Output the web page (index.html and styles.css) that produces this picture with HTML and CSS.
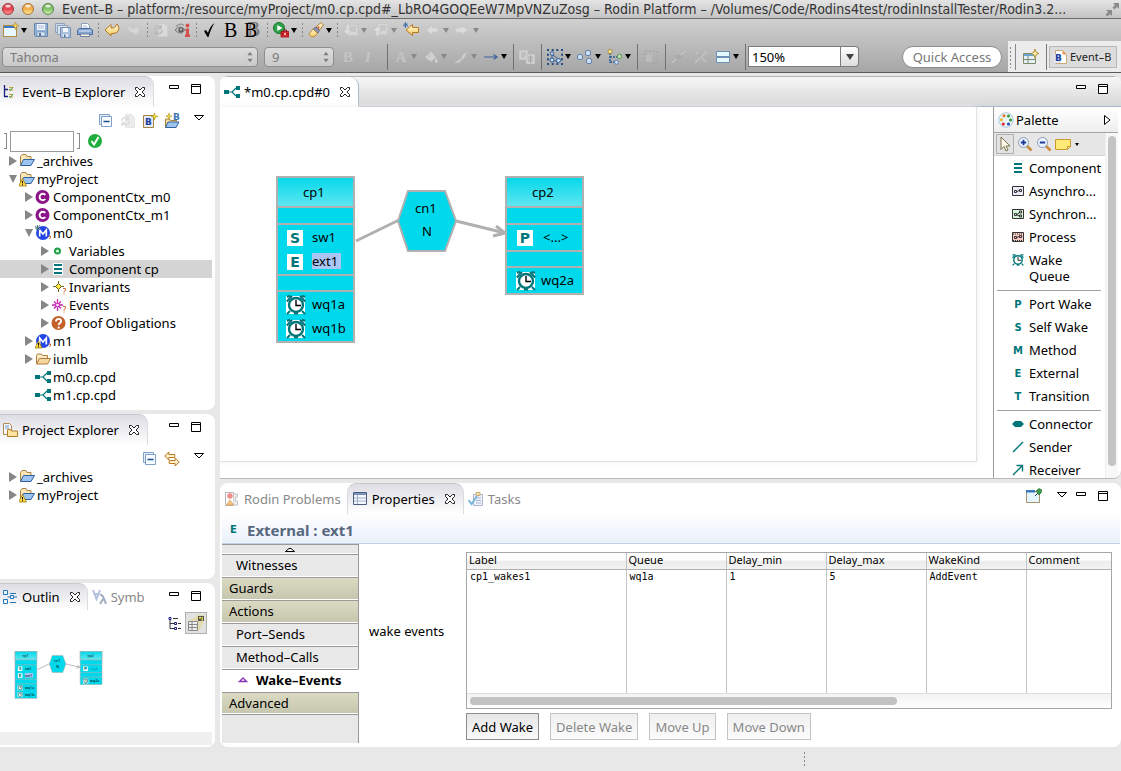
FILE: index.html
```html
<!DOCTYPE html>
<html lang="en">
<head>
<meta charset="utf-8">
<title>Event-B - Rodin Platform</title>
<link rel="stylesheet" href="styles.css">
</head>
<body>
<svg class="defs" aria-hidden="true">
  <defs>
    <linearGradient id="gRed" x1="0" y1="0" x2="0" y2="1"><stop offset="0" stop-color="#d8414a"/><stop offset=".5" stop-color="#e8434d"/><stop offset="1" stop-color="#ff9d9d"/></linearGradient>
    <linearGradient id="gAmber" x1="0" y1="0" x2="0" y2="1"><stop offset="0" stop-color="#e5a04a"/><stop offset=".5" stop-color="#f3b14f"/><stop offset="1" stop-color="#ffeb9a"/></linearGradient>
    <linearGradient id="gGreen" x1="0" y1="0" x2="0" y2="1"><stop offset="0" stop-color="#6fae5a"/><stop offset=".5" stop-color="#84c56c"/><stop offset="1" stop-color="#d0f5b0"/></linearGradient>
    <linearGradient id="gHead" x1="0" y1="0" x2="0" y2="1"><stop offset="0" stop-color="#03d8ea"/><stop offset="1" stop-color="#62e6f0"/></linearGradient>
    <linearGradient id="gGold" x1="0" y1="0" x2="0" y2="1"><stop offset="0" stop-color="#fffbe0"/><stop offset="1" stop-color="#f6c85a"/></linearGradient>
    <symbol id="new" viewBox="0 0 16 16"><rect x=".5" y="3.5" width="13" height="11" fill="#e8f6ff" stroke="#b08c3c"/><path d="M1 4h12v2H1z" fill="#3c78c8"/><path d="M12.500 0l1 3 2.500.5-2.500 1-1 3-1-3-3-1 3-.5z" fill="#ffe36a" stroke="#b08a20" stroke-width=".7"/></symbol>
    <symbol id="save" viewBox="0 0 16 16"><path d="M1.500 1.500h13v13h-12l-1-1z" fill="#8fb2d9" stroke="#6c86aa"/><path d="M4 2h8v6H4z" fill="#f4f8fc"/><path d="M5 4h6M5 6h6" stroke="#a9bdd6"/><path d="M4 10h8v4H4z" fill="#dbe6f2" stroke="#6484ac" stroke-width=".6"/><path d="M6 11h2v3H6z" fill="#557199"/></symbol>
    <symbol id="saveall" viewBox="0 0 16 16"><path d="M.5 1.500h9v9h-9z" fill="#c9d8e8" stroke="#8ea2bc"/><path d="M2.500 3.500h10v9h-10z" fill="#d9e4ef" stroke="#8ea2bc"/><path d="M5.500 5.500h10v10h-10z" fill="#a9c1dd" stroke="#7590b4"/><path d="M8 6h5v4H8z" fill="#f4f8fc"/><path d="M8 12h5v3H8z" fill="#e0e9f3"/><path d="M9 12.500h1.500V15H9z" fill="#557199"/></symbol>
    <symbol id="print" viewBox="0 0 16 16"><path d="M4.500 7V1.500h6l2 2V7" fill="#fff" stroke="#8b9dbb"/><path d="M6 4h4M6 6h5" stroke="#a9bad6"/><path d="M.5 8l2-1.500h11l2 1.500v4.500H.5z" fill="#86a4d0" stroke="#4c6ca4"/><path d="M2 9h12" stroke="#dfe9f8"/><path d="M3.500 12h9v2.500h-9z" fill="#fff6d8" stroke="#6a7ea8"/></symbol>
    <symbol id="undo" viewBox="0 0 16 16"><path d="M1 8l6-5.500v3.500c3 .5 5-1 6-4 3 4 2.500 9-4 9.500H7V14z" fill="url(#gGold)" stroke="#b87a22"/></symbol>
    <symbol id="redo" viewBox="0 0 16 16"><path d="M14 8l-5-4.500v3C6 7 4 6 2 3c-1 4 1 7.500 5.500 8H9v3z" fill="#d6d6d6" stroke="#c6c6c6" stroke-width=".6"/></symbol>
    <symbol id="refresh" viewBox="0 0 16 16"><path d="M5.500 1.500h6l3 3v10h-9z" fill="#dadada" stroke="#cccccc"/><path d="M2 8c0-4 5-5 6-2M9 8c0 4-5 5-6 2M8 3v3.500H5M2 13v-3h3" fill="none" stroke="#b9b9b9" stroke-width="1.500"/></symbol>
    <symbol id="eye" viewBox="0 0 16 16"><path d="M0 8c3-4 7-4 10 0-3 4-7 4-10 0z" fill="#b8b8b8" stroke="#7d7d7d"/><circle cx="6" cy="8" r="2.600" fill="#5d5d5d"/><circle cx="6" cy="7.500" r=".9" fill="#ddd"/><path d="M1 4.500c3-3 6-3 8-1" fill="none" stroke="#777"/><path d="M10.500 6.500h3.500v6h1V15h-5v-2.500h1V9h-.5z" fill="#d4504c"/><circle cx="12.500" cy="3.500" r="1.900" fill="#d4504c"/></symbol>
    <symbol id="tick" viewBox="0 0 16 16"><path d="M2 9l2-1 2 3C7 7 9.500 3 12.500 1 10 5 8 9.500 6.500 15H5.500z" fill="#000"/></symbol>
    <symbol id="run" viewBox="0 0 16 16"><circle cx="6" cy="6" r="5.500" fill="#2fa34a" stroke="#19732c"/><path d="M4.300 3l5 3-5 3z" fill="#fff"/><path d="M8 9.500h8V15H8z" fill="#e02a32" stroke="#9c1018" stroke-width=".8"/><path d="M10.500 9.500V8h3v1.500M8 12h8" fill="none" stroke="#8c1018"/><path d="M11 11h2v2h-2z" fill="#fbb"/></symbol>
    <symbol id="torch" viewBox="0 0 16 16"><path d="M8 5l5-4.500 2.500 2.500-4 5z" fill="#ffe7ad" stroke="#b08040"/><path d="M5 7l3-2 3.500 3.500-2 3z" fill="#8d93ac" stroke="#6b6f86"/><path d="M5 7l4.500 4.500L7 14c-3 2-5 0-6-2z" fill="url(#gGold)" stroke="#bd8a34"/><circle cx="10.500" cy="5.500" r=".9" fill="#c33"/></symbol>
    <symbol id="nextann" viewBox="0 0 16 16"><path d="M4.500 2.500h10v11h-10z" fill="#d6d6d6" stroke="#c9c9c9"/><path d="M7 5h6M7 7h6M7 9h6" stroke="#b8b8b8"/><path d="M3 2h3v6h3l-4.500 5L0 8h3z" fill="#dedede" stroke="#bcbcbc" stroke-width=".6"/></symbol>
    <symbol id="prevann" viewBox="0 0 16 16"><path d="M4.500 1.500h10v11h-10z" fill="#d6d6d6" stroke="#c9c9c9"/><path d="M7 4h6M7 6h6M7 8h6" stroke="#b8b8b8"/><path d="M3 14h3V9h3L4.500 4 0 9h3z" fill="#dedede" stroke="#bcbcbc" stroke-width=".6"/></symbol>
    <symbol id="lastedit" viewBox="0 0 16 16"><path d="M15.500 5.500v5h-6v3L3 8l6.500-5.500v3z" fill="url(#gGold)" stroke="#b87a22"/><path d="M2.500 0v6M0 3h5M1 1.200l3.500 3.600M4.500 1.200L1 4.800" stroke="#3c6cae" stroke-width=".9"/></symbol>
    <symbol id="back" viewBox="0 0 16 16"><path d="M13 5.800v4.400H7.500v2.600L.8 8l6.700-4.800v2.600z" fill="#dcdcdc" stroke="#c8c8c8"/></symbol>
    <symbol id="fwd" viewBox="0 0 16 16"><path d="M.8 5.800v4.400h5.500v2.600L13 8 6.300 3.200v2.600z" fill="#dcdcdc" stroke="#c8c8c8"/></symbol>
    <symbol id="bucket" viewBox="0 0 16 16"><path d="M2 8l6-6 5 6-5 5z" fill="#d0d0d0" stroke="#bcbcbc"/><path d="M6 2v6" stroke="#bababa"/><path d="M13 9c2 2 2 5 0 5s-1-3 0-5z" fill="#d0d0d0"/></symbol>
    <symbol id="brush" viewBox="0 0 16 16"><path d="M14.500 2l-5 4-2 4 2 1 3-4z" fill="#d0d0d0" stroke="#b8b8b8" stroke-width=".7"/><path d="M1 14h5l3-3-2-1.500z" fill="#c8c8c8"/></symbol>
    <symbol id="line" viewBox="0 0 16 16"><path d="M1 8h13M10.500 5.500L14 8l-3.500 2.500" fill="none" stroke="#3f5f9d" stroke-width="1.200"/></symbol>
    <symbol id="copyapp" viewBox="0 0 16 16"><path d="M.5 1.500h8v9h-8zM7.500 5.500h8v9h-8z" fill="#d2d2d2" stroke="#c8c8c8"/><path d="M2 4h5M2 6h5M2 8h4M9 8h5M9 10h5M9 12h5M11.500 6v8" stroke="#a9a9a9"/></symbol>
    <symbol id="selall" viewBox="0 0 16 16"><g fill="#234f86"><path d="M0 0h2v2H0zM4.700 0h2v2h-2zM9.300 0h2v2h-2zM14 0h2v2h-2zM0 4.700h2v2H0zM14 4.700h2v2h-2zM0 9.300h2v2H0zM14 9.300h2v2h-2zM0 14h2v2H0zM4.700 14h2v2h-2zM9.300 14h2v2h-2zM14 14h2v2h-2z"/></g><path d="M5 5l7 6M5 11V5M5 12h7" stroke="#2b5c96"/><circle cx="5" cy="4.500" r="1.700" fill="#cfe2f8" stroke="#2b5c96"/><circle cx="5" cy="11" r="2" fill="#cfe2f8" stroke="#2b5c96"/><circle cx="11.500" cy="11.500" r="2" fill="#cfe2f8" stroke="#2b5c96"/></symbol>
    <symbol id="align" viewBox="0 0 16 16"><g fill="#cfe0f2" stroke="#5f83ae"><rect x=".5" y="5.500" width="5" height="5" rx="1.500"/><rect x="8.500" y="1.500" width="5" height="5" rx="1.500"/><rect x="9.500" y="9.500" width="5" height="5" rx="1.500"/></g></symbol>
    <symbol id="arrange" viewBox="0 0 16 16"><path d="M3 4v10M3 8h8M3 13h6" fill="none" stroke="#2b5c96" stroke-width="1.500" stroke-dasharray="2 1"/><circle cx="3" cy="2.500" r="2" fill="#fdf0a4" stroke="#b48a2a"/><circle cx="12.500" cy="7.500" r="2.200" fill="#b8e2ae" stroke="#5b9455"/><circle cx="9.500" cy="13.300" r="2" fill="#cfe2f8" stroke="#5f83ae"/></symbol>
    <symbol id="marquee" viewBox="0 0 16 16"><path d="M2 2h12v12H2z" fill="none" stroke="#a2a2a2" stroke-dasharray="2 2"/><path d="M3 6h6v7H3z" fill="#bdbdbd"/></symbol>
    <symbol id="snip" viewBox="0 0 16 16"><path d="M1 14l5-5M9 6l6-4" stroke="#c4c4c4" stroke-width="1.500"/><path d="M5 6v4M7 6v4M9 6v4M11 6v3" stroke="#a2a2a2"/></symbol>
    <symbol id="cross" viewBox="0 0 16 16"><path d="M2 14L14 2M3 3l10 10" stroke="#c4c4c4" stroke-width="1.200"/><path d="M5 6h3l-2 3" stroke="#a2a2a2" fill="none"/></symbol>
    <symbol id="compart" viewBox="0 0 16 16"><path d="M1.500 2.500h13v11h-13z" fill="#e6f8ff" stroke="#6e90b4"/><path d="M1 8h14" stroke="#6e90b4" stroke-width="2"/></symbol>
    <symbol id="persp" viewBox="0 0 16 16"><path d="M.5 4.500h12v10H.5z" fill="#e3f1fb" stroke="#7f8a68"/><path d="M1 5h11v2H1z" fill="#6ba4cf"/><path d="M5 7v7M1 10.500h11" stroke="#7f8a68"/><path d="M12 0l1.200 3.300L16 4.500l-2.800 1.200L12 9l-1.200-3.300L8 4.500l2.800-1.200z" fill="#fff0a8" stroke="#b08a30" stroke-width=".9"/></symbol>
    <symbol id="bdoc" viewBox="0 0 16 16"><path d="M3.500 1.500h7l4 4v9h-11z" fill="#fff" stroke="#c9a877"/><path d="M10.500 1.500v4h4z" fill="#f0934a"/><path d="M2 5h7v9H2z" fill="#dfe8f8"/></symbol>
    <symbol id="evtree" viewBox="0 0 16 16"><path d="M2.500 1v12M2 5.500h4M2 12.500h4" fill="none" stroke="#1b1f7c" stroke-width="1.300"/><path d="M7 3.500h4M7 6h4M7 10.500h4M7 13h4" stroke="#d9a23a"/><path d="M7 5l1.500 1.500L11 3M7 12l1.500 1.500L11 10" stroke="#3a9a3a" fill="none"/></symbol>
    <symbol id="close" viewBox="0 0 12 12"><path d="M1.500 1.500h2L6 4l2.500-2.500h2v2L8 6l2.500 2.500v2h-2L6 8l-2.500 2.500h-2v-2L4 6 1.500 3.500z" fill="#fff" stroke="#222"/></symbol>
    <symbol id="min" viewBox="0 0 12 12"><path d="M1.500 2.500h9v3h-9z" fill="#fff" stroke="#000"/></symbol>
    <symbol id="max" viewBox="0 0 12 12"><path d="M1.500 1.500h9v9h-9zM1.500 3.500h9" fill="#fff" stroke="#000"/></symbol>
    <symbol id="vmenu" viewBox="0 0 12 12"><path d="M1.500 3.500h9L6 8z" fill="#fff" stroke="#000"/></symbol>
    <symbol id="collapse" viewBox="0 0 16 16"><path d="M1.500 1.500h10v10h-10z" fill="#e6eff8" stroke="#7f9fc4"/><path d="M3.500 3.500h10v10h-10z" fill="#f6fbff" stroke="#7f9fc4"/><path d="M5.500 8.500h6" stroke="#1d4f8c" stroke-width="1.400"/></symbol>
    <symbol id="bnew" viewBox="0 0 16 16"><path d="M1.500 2.500h10v12h-10z" fill="#e2ecfb" stroke="#a8823a"/><path d="M12.500 0l.8 2.700L16 3.500l-2.700.8-.8 2.700-.8-2.700L9 3.500l2.700-.8z" fill="#f7e33c" stroke="#a8921c" stroke-width=".6"/></symbol>
    <symbol id="bfold" viewBox="0 0 16 16"><path d="M1.500 14V6h4l1 1.500h6V14z" fill="#f4dca0" stroke="#a8823a"/><path d="M4 9h11l-3 5.500H1.500z" fill="#9fc4ee" stroke="#2f62a4"/><path d="M5 0l.7 2.500L8 3.200l-2.300.8L5 6.500 4.300 4 2 3.200l2.300-.7z" fill="#f7e33c" stroke="#a8921c" stroke-width=".6"/></symbol>
    <symbol id="ok" viewBox="0 0 16 16"><circle cx="8" cy="8" r="7" fill="#1fae3c"/><path d="M4.500 8l2.500 3.500L11.500 4" fill="none" stroke="#fff" stroke-width="2"/></symbol>
    <symbol id="proj" viewBox="0 0 16 16"><path d="M1.500 12V3.500l1.500-2h4l1 2h4V12z" fill="#fbe6b4" stroke="#a9834a"/><path d="M4.500 6.500h11L12 12.500H1.500z" fill="#9cc4f0" stroke="#2f5f9e"/></symbol>
    <symbol id="projw" viewBox="0 0 16 16"><use href="#proj"/><path d="M3.500 7.500L7.500 15h-8z" fill="#ffdd4a" stroke="#a07810" stroke-width=".8"/><path d="M3.500 10v2.500M3.500 13.300v1" stroke="#000"/></symbol>
    <symbol id="ctx" viewBox="0 0 16 16"><circle cx="7.500" cy="8" r="7" fill="#8b1588"/><path d="M10.300 6A3.200 3.200 0 1 0 10.300 10" fill="none" stroke="#fff" stroke-width="1.900"/></symbol>
    <symbol id="mach" viewBox="0 0 16 16"><circle cx="8" cy="8" r="7" fill="#2345e4"/><path d="M4.700 11.500V5L8 9l3.300-4v6.500" fill="none" stroke="#fff" stroke-width="1.700"/></symbol>
    <symbol id="mach0" viewBox="0 0 16 16"><use href="#mach"/><path d="M0 1l5 4M5 0L1 5M2.500 0v5M0 3h5" stroke="#4a6f80" stroke-width=".9"/><path d="M13.500 11h2v1.500L14.500 14" stroke="#c8642c" fill="none"/></symbol>
    <symbol id="mach1" viewBox="0 0 16 16"><use href="#mach"/><path d="M3.500 8L7 15H0z" fill="#ffdd4a" stroke="#a07810" stroke-width=".8"/><path d="M3.500 10v2.500M3.500 13.300v1" stroke="#000"/><path d="M13.500 11h2v1.500L14.500 14" stroke="#c8642c" fill="none"/></symbol>
    <symbol id="vars" viewBox="0 0 16 16"><circle cx="6.500" cy="8" r="2.500" fill="#d6ffe0" stroke="#21a04a" stroke-width="2"/></symbol>
    <symbol id="bars" viewBox="0 0 16 16"><path d="M2 2h10v12H2z" fill="#fff"/><path d="M3 4h8M3 8h8M3 12h8" stroke="#00767a" stroke-width="2"/></symbol>
    <symbol id="inv" viewBox="0 0 16 16"><path d="M7.500 2v11M2 7.500h11" stroke="#6a6020"/><path d="M7.500 4.500l3 3-3 3-3-3z" fill="#ffe93c" stroke="#6a6020"/><path d="M12 9.500h2.500v2L13 12.500v1M13 14.500v1" stroke="#cc6a3c" fill="none"/></symbol>
    <symbol id="evt" viewBox="0 0 16 16"><path d="M6.500 2v12M1 8h11M3 4.500l7 7M10 4.500l-7 7" stroke="#c722b4" stroke-width="1.300"/><circle cx="6.500" cy="8" r="1.800" fill="#fff" stroke="#c722b4"/><path d="M12 9.500h2.500v2L13 12.500v1M13 14.500v1" stroke="#cc6a3c" fill="none"/></symbol>
    <symbol id="po" viewBox="0 0 16 16"><circle cx="7.500" cy="8" r="7" fill="#c4602a"/><path d="M5 6.500C5 3 10.500 3 10 6.500 10 8 7.700 8 7.700 10M7.700 11.500v2" fill="none" stroke="#fff" stroke-width="1.900"/></symbol>
    <symbol id="folder" viewBox="0 0 16 16"><path d="M1.500 12.500v-8l1-1.500h4l1 1.500h5v3" fill="#fbe9c4" stroke="#b07d3c"/><path d="M4.500 7.500h11l-3 5.500h-11z" fill="#f5d69c" stroke="#b07d3c"/></symbol>
    <symbol id="cpd" viewBox="0 0 16 16"><path d="M0 6h5v4H0zM12 2h4v4h-4zM12 10h4v4h-4z" fill="#00767a"/><path d="M5 8h3l4-4M8 8l4 4" fill="none" stroke="#00767a" stroke-width="1.200"/></symbol>
    <symbol id="pexp" viewBox="0 0 16 16"><path d="M1.500 1.500h6l2 2v9h-8z" fill="#f3f7fd" stroke="#b08c4c"/><path d="M3 4h4M3 6h4" stroke="#7b9cc8"/><path d="M5.500 14.500v-7h3l1 1.500h6v5.500z" fill="#ffe3a0" stroke="#b07d2c"/></symbol>
    <symbol id="link" viewBox="0 0 16 16"><path d="M.8 5l4-4v2.500h6v3h-6V9zM15.200 11l-4 4v-2.500h-6v-3h6V7z" fill="#fff2cc" stroke="#b87a22"/></symbol>
    <symbol id="outl" viewBox="0 0 16 16"><path d="M1.500 1.500h4v4h-4zM1.500 10.500h4v4h-4z" fill="#eef7ff" stroke="#2577b8"/><path d="M8 4.500h6M8 13.500h6M12 8h3M5.500 8h3" stroke="#2577b8"/><path d="M8.500 6.500h3v3h-3z" fill="#eef7ff" stroke="#2577b8"/></symbol>
    <symbol id="symb" viewBox="0 0 16 16"><path d="M1 1l3.500 9L8 1M2.500 5h4" fill="none" stroke="#b3c0e0" stroke-width="2"/><path d="M8 6c2-1 3 1 6 9M11 10l-3 5" fill="none" stroke="#a3adc2" stroke-width="2"/></symbol>
    <symbol id="otree" viewBox="0 0 16 16"><path d="M4 4v9.500h4M4 8.500h4" fill="none" stroke="#333"/><path d="M3 2.500h2v2H3zM8.500 7.500h2v2h-2zM8.500 12.500h2v2h-2z" fill="#fff" stroke="#1d1d80"/><path d="M7 3.500h5M12 8.500h3M12 13.500h3" stroke="#333"/></symbol>
    <symbol id="oview" viewBox="0 0 16 16"><path d="M1 6l9-6h6v6l-5 10z" fill="#e2dcb0"/><path d="M.5 6.500h9v9h-9z" fill="#eee" stroke="#888"/><path d="M1 9.500h8M1 12.500h8M4 7v8" stroke="#888"/><path d="M10 1h6v5h-6z" fill="#555"/><path d="M11 2h2v1.500h-2zM13.500 2H15v1.500h-1.500zM13.500 4H15v1.500h-1.500z" fill="#ffe93c"/></symbol>
    <symbol id="pal" viewBox="0 0 16 16"><circle cx="8" cy="8" r="7.300" fill="#e8f3fa" stroke="#9cc0d4" stroke-width=".8"/><circle cx="6" cy="3.800" r="1.600" fill="#e87c28"/><circle cx="10.500" cy="4" r="1.600" fill="#3a9a3a"/><circle cx="3.400" cy="7.700" r="1.500" fill="#e8b828"/><circle cx="12.600" cy="8" r="1.600" fill="#3a9a3a"/><circle cx="5.300" cy="12" r="1.600" fill="#e8282c"/><circle cx="10.500" cy="12" r="1.600" fill="#2850c8"/></symbol>
    <symbol id="cursor" viewBox="0 0 16 16"><path d="M4 1v12.500l3-3 2 4.500 2-1-2-4h4z" fill="#fffbe8" stroke="#77704e"/></symbol>
    <symbol id="zin" viewBox="0 0 16 16"><path d="M9.500 9.500l5 5" stroke="#c88a3c" stroke-width="2.500"/><circle cx="6.500" cy="6.500" r="5" fill="#eef5fd" stroke="#8a9ab4"/><path d="M3.800 6.500h5.400M6.500 3.800v5.400" stroke="#1d3d9c" stroke-width="1.800"/></symbol>
    <symbol id="zout" viewBox="0 0 16 16"><path d="M9.500 9.500l5 5" stroke="#c88a3c" stroke-width="2.500"/><circle cx="6.500" cy="6.500" r="5" fill="#eef5fd" stroke="#8a9ab4"/><path d="M3.800 6.500h5.400" stroke="#1d3d9c" stroke-width="1.800"/></symbol>
    <symbol id="note" viewBox="0 0 16 16"><path d="M.5 3.500h15v7l-3 3H.5z" fill="#ffe978" stroke="#c89a2c"/><path d="M15.500 10.500h-3v3z" fill="#fff6c0" stroke="#c89a2c"/></symbol>
    <symbol id="async" viewBox="0 0 12 12"><path d="M.5 1.500h11v9H.5z" fill="#ececfb" stroke="#333"/><path d="M2.500 5.500h2v2h-2zM7.500 4.500h2v2h-2zM5 6.500l2-1" fill="none" stroke="#333"/></symbol>
    <symbol id="sync" viewBox="0 0 12 12"><path d="M.5 1.500h11v9H.5z" fill="#d8f4d8" stroke="#333"/><path d="M2.500 5.500h2v2h-2zM7.500 3h2v2h-2zM7.500 7h2v2h-2zM5 6.500l2.500-2M5 7l2.500 1" fill="none" stroke="#333"/></symbol>
    <symbol id="proc" viewBox="0 0 12 12"><path d="M.5 1.500h11v9H.5z" fill="#f8c8c0" stroke="#333"/><path d="M1 3h10M1 9.500h10" stroke="#333" stroke-dasharray="1 1"/><path d="M2.500 5.500h2v2h-2zM7.500 4.500h2v2h-2zM5 6.500l2-1" fill="none" stroke="#333"/></symbol>
    <symbol id="clock" viewBox="0 0 20 20"><circle cx="10" cy="10" r="7" fill="none" stroke="#00767a" stroke-width="2.400"/><path d="M.8 6.500L6 1M1 2l3-1.500M19.200 6.500L14 1M19 2l-3-1.500M4 16l-3 3M16 16l3 3M8 18.500h4" fill="none" stroke="#00767a" stroke-width="2"/><path d="M10 5v5.500h5" fill="none" stroke="#000" stroke-width="1.400"/></symbol>
    <symbol id="conn" viewBox="0 0 12 12"><path d="M0 6l3-3h6l3 3-3 3H3z" fill="#00767a"/></symbol>
    <symbol id="send" viewBox="0 0 12 12"><path d="M1 11L11 1" stroke="#00767a" stroke-width="1.400"/></symbol>
    <symbol id="recv" viewBox="0 0 12 12"><path d="M1 11L11 1M4.500 1.500H10.500V7.500" fill="none" stroke="#00767a" stroke-width="1.400"/></symbol>
    <symbol id="probs" viewBox="0 0 16 16"><path d="M1.500 1.500h8v13h-8z" fill="#fff" stroke="#b4b4b4"/><path d="M9.500 3h4v3h-2v4h2v4h-4" fill="#eee" stroke="#c4c4c4"/><circle cx="6" cy="5" r="2.800" fill="#f08c8c"/><path d="M6 9l3.500 5h-7z" fill="#f7c27c" stroke="#d89c54" stroke-width=".7"/></symbol>
    <symbol id="props" viewBox="0 0 16 16"><path d="M1.500 1.500h13v12h-13z" fill="#f4f8fc" stroke="#4a5f84"/><path d="M2 2h12v2H2z" fill="#7d93bc"/><path d="M5.500 4v9M2 7h12M2 10h12" stroke="#9fb0cc"/></symbol>
    <symbol id="tasks" viewBox="0 0 16 16"><path d="M5.500 3.500h9v11h-9z" fill="#eef2fa" stroke="#a9b5cc"/><path d="M8 1.500h4v3H8z" fill="#f6dfaa" stroke="#c9b07c"/><path d="M8 7h5M8 9.500h5M8 12h5" stroke="#a9bad6"/><path d="M.5 9l3 4L9 5" fill="none" stroke="#7cb8dc" stroke-width="2"/></symbol>
    <symbol id="pin" viewBox="0 0 16 16"><path d="M.5 3.500h13v11H.5z" fill="#e4f6fb" stroke="#a8906c"/><path d="M0 2h9v2.500H0z" fill="#3c78c0"/><path d="M9 8l3-3" stroke="#444"/><path d="M10 3l3-2.500 3 1.500-1 3-2 2z" fill="#3a9a4a" stroke="#1f6c2c" stroke-width=".6"/></symbol>
    <symbol id="updown" viewBox="0 0 8 16"><path d="M1 6l3-4 3 4zM1 10l3 4 3-4z" fill="#808080"/></symbol>
    <symbol id="full" viewBox="0 0 16 16"><path d="M8 2h6v6l-2-2-2.500 2.500-2-2L10 4zM1 9h6v6l-2-2-2.500 2.500-2-2L3 11z" fill="#8a8a8a"/></symbol>
  </defs>
</svg>

<header class="titlebar">
  <div class="lights">
    <svg viewBox="0 0 12 12"><circle cx="6" cy="6" r="5.500" fill="url(#gRed)" stroke="#9c3a3e"/><ellipse cx="6" cy="3" rx="2.800" ry="1.500" fill="#fff" opacity=".75"/></svg>
    <svg viewBox="0 0 12 12"><circle cx="6" cy="6" r="5.500" fill="url(#gAmber)" stroke="#a8763a"/><ellipse cx="6" cy="3" rx="2.800" ry="1.500" fill="#fff" opacity=".75"/></svg>
    <svg viewBox="0 0 12 12"><circle cx="6" cy="6" r="5.500" fill="url(#gGreen)" stroke="#5c8450"/><ellipse cx="6" cy="3" rx="2.800" ry="1.500" fill="#fff" opacity=".75"/></svg>
  </div>
  <h1>Event–B – platform:/resource/myProject/m0.cp.cpd#_LbRO4GOQEeW7MpVNZuZosg – Rodin Platform – /Volumes/Code/Rodins4test/rodinInstallTester/Rodin3.2...</h1>
  <svg class="i16"><use href="#full"/></svg>
</header>

<div class="toolbars">
  <div class="bar bar-top">
    <button class="tb dd" aria-label="New"><svg class="i16"><use href="#new"/></svg></button>
    <button class="tb" aria-label="Save"><svg class="i16"><use href="#save"/></svg></button>
    <button class="tb" aria-label="Save All"><svg class="i16"><use href="#saveall"/></svg></button>
    <button class="tb" aria-label="Print"><svg class="i16"><use href="#print"/></svg></button>
    <i class="dots"></i>
    <button class="tb" aria-label="Undo"><svg class="i16"><use href="#undo"/></svg></button>
    <button class="tb" aria-label="Redo" disabled><svg class="i16"><use href="#redo"/></svg></button>
    <i class="dots"></i>
    <button class="tb" aria-label="Refresh" disabled><svg class="i16"><use href="#refresh"/></svg></button>
    <button class="tb" aria-label="Show information"><svg class="i16"><use href="#eye"/></svg></button>
    <i class="dots"></i>
    <button class="tb" aria-label="Check"><svg class="i16"><use href="#tick"/></svg></button>
    <button class="tb glyph">B</button>
    <button class="tb glyph glyph-double">B</button>
    <i class="dots"></i>
    <button class="tb dd" aria-label="External tools"><svg class="i16"><use href="#run"/></svg></button>
    <i class="dots"></i>
    <button class="tb dd" aria-label="Search"><svg class="i16"><use href="#torch"/></svg></button>
    <i class="dots"></i>
    <button class="tb dd" aria-label="Next annotation" disabled><svg class="i16"><use href="#nextann"/></svg></button>
    <button class="tb dd" aria-label="Previous annotation" disabled><svg class="i16"><use href="#prevann"/></svg></button>
    <button class="tb" aria-label="Last edit location"><svg class="i16"><use href="#lastedit"/></svg></button>
    <button class="tb dd" aria-label="Back" disabled><svg class="i16"><use href="#back"/></svg></button>
    <button class="tb dd" aria-label="Forward" disabled><svg class="i16"><use href="#fwd"/></svg></button>
  </div>
  <div class="bar bar-bottom">
    <div class="pick pick-font"><select aria-label="Font" disabled><option>Tahoma</option></select><svg><use href="#updown"/></svg></div>
    <div class="pick pick-size"><select aria-label="Font size" disabled><option>9</option></select><svg><use href="#updown"/></svg></div>
    <button class="tb glyph faint" disabled>B</button>
    <button class="tb glyph faint italic" disabled>I</button>
    <i class="rule"></i>
    <button class="tb dd glyph faint" disabled><span>A</span></button>
    <button class="tb dd" aria-label="Fill color" disabled><svg class="i16"><use href="#bucket"/></svg></button>
    <button class="tb dd" aria-label="Line color" disabled><svg class="i16"><use href="#brush"/></svg></button>
    <button class="tb dd" aria-label="Line style"><svg class="i16"><use href="#line"/></svg></button>
    <i class="rule"></i>
    <button class="tb" aria-label="Copy appearance" disabled><svg class="i16"><use href="#copyapp"/></svg></button>
    <i class="rule"></i>
    <button class="tb dd" aria-label="Select all"><svg class="i16"><use href="#selall"/></svg></button>
    <button class="tb dd" aria-label="Arrange"><svg class="i16"><use href="#align"/></svg></button>
    <button class="tb dd" aria-label="Align"><svg class="i16"><use href="#arrange"/></svg></button>
    <i class="rule"></i>
    <button class="tb" aria-label="Auto size" disabled><svg class="i16"><use href="#marquee"/></svg></button>
    <i class="rule"></i>
    <button class="tb" aria-label="Show labels" disabled><svg class="i16"><use href="#snip"/></svg></button>
    <button class="tb" aria-label="Hide labels" disabled><svg class="i16"><use href="#cross"/></svg></button>
    <button class="tb dd" aria-label="Compartments"><svg class="i16"><use href="#compart"/></svg></button>
    <i class="rule"></i>
    <div class="zoom"><input type="text" aria-label="Zoom" value="150%"><button aria-label="Zoom levels"></button></div>
    <div class="quick"><input type="text" aria-label="Quick Access" placeholder="Quick Access"></div>
    <div class="persp">
      <i class="dots"></i>
      <button class="persp-open" aria-label="Open perspective"><svg class="i16"><use href="#persp"/></svg></button>
      <button class="persp-on"><span class="badge"><svg class="i16"><use href="#bdoc"/></svg><b>B</b></span>Event–B</button>
    </div>
  </div>
</div>

<main class="workbench">
  <div class="col-left">
    <section class="view view-explorer">
      <div class="head">
        <div class="tab on"><svg class="i16"><use href="#evtree"/></svg><span>Event–B Explorer</span><button aria-label="Close"><svg class="i12"><use href="#close"/></svg></button></div>
        <div class="winctl"><button aria-label="Minimize"><svg class="i12"><use href="#min"/></svg></button><button aria-label="Maximize"><svg class="i12"><use href="#max"/></svg></button></div>
      </div>
      <div class="tools">
        <button aria-label="Collapse all"><svg class="i16"><use href="#collapse"/></svg></button>
        <button aria-label="Refresh" class="pale" disabled><svg class="i16"><use href="#refresh"/></svg></button>
        <button class="badge" aria-label="New component"><svg class="i16"><use href="#bnew"/></svg><b>B</b></button>
        <button class="badge badge-right" aria-label="New project"><svg class="i16"><use href="#bfold"/></svg><b>B</b></button>
        <button class="vm" aria-label="View menu"><svg class="i12"><use href="#vmenu"/></svg></button>
      </div>
      <div class="filter"><i class="brk"></i><input type="text" aria-label="Filter"><i class="brk"></i><button aria-label="Discharged filter"><svg class="i16"><use href="#ok"/></svg></button></div>
      <ul class="tree">
        <li><button class="tri" aria-label="Expand"></button><svg class="i16"><use href="#proj"/></svg>_archives</li>
        <li><button class="tri open" aria-label="Collapse"></button><svg class="i16"><use href="#projw"/></svg>myProject</li>
        <li class="d1"><button class="tri" aria-label="Expand"></button><svg class="i16"><use href="#ctx"/></svg>ComponentCtx_m0</li>
        <li class="d1"><button class="tri" aria-label="Expand"></button><svg class="i16"><use href="#ctx"/></svg>ComponentCtx_m1</li>
        <li class="d1"><button class="tri open" aria-label="Collapse"></button><svg class="i16"><use href="#mach0"/></svg>m0</li>
        <li class="d2"><button class="tri" aria-label="Expand"></button><svg class="i16"><use href="#vars"/></svg>Variables</li>
        <li class="d2 sel"><button class="tri" aria-label="Expand"></button><svg class="i16"><use href="#bars"/></svg>Component cp</li>
        <li class="d2"><button class="tri" aria-label="Expand"></button><svg class="i16"><use href="#inv"/></svg>Invariants</li>
        <li class="d2"><button class="tri" aria-label="Expand"></button><svg class="i16"><use href="#evt"/></svg>Events</li>
        <li class="d2"><button class="tri" aria-label="Expand"></button><svg class="i16"><use href="#po"/></svg>Proof Obligations</li>
        <li class="d1"><button class="tri" aria-label="Expand"></button><svg class="i16"><use href="#mach1"/></svg>m1</li>
        <li class="d1"><button class="tri" aria-label="Expand"></button><svg class="i16"><use href="#folder"/></svg>iumlb</li>
        <li class="d1 leaf"><svg class="i16"><use href="#cpd"/></svg>m0.cp.cpd</li>
        <li class="d1 leaf"><svg class="i16"><use href="#cpd"/></svg>m1.cp.cpd</li>
      </ul>
    </section>

    <section class="view view-project">
      <div class="head">
        <div class="tab on"><svg class="i16"><use href="#pexp"/></svg><span>Project Explorer</span><button aria-label="Close"><svg class="i12"><use href="#close"/></svg></button></div>
        <div class="winctl"><button aria-label="Minimize"><svg class="i12"><use href="#min"/></svg></button><button aria-label="Maximize"><svg class="i12"><use href="#max"/></svg></button></div>
      </div>
      <div class="tools">
        <button aria-label="Collapse all"><svg class="i16"><use href="#collapse"/></svg></button>
        <button aria-label="Link with editor"><svg class="i16"><use href="#link"/></svg></button>
        <button class="vm" aria-label="View menu"><svg class="i12"><use href="#vmenu"/></svg></button>
      </div>
      <ul class="tree">
        <li><button class="tri" aria-label="Expand"></button><svg class="i16"><use href="#proj"/></svg>_archives</li>
        <li><button class="tri" aria-label="Expand"></button><svg class="i16"><use href="#projw"/></svg>myProject</li>
      </ul>
    </section>

    <section class="view view-outline">
      <div class="head">
        <div class="tab on"><svg class="i16"><use href="#outl"/></svg><span>Outlin</span><button aria-label="Close"><svg class="i12"><use href="#close"/></svg></button></div>
        <div class="tab off"><svg class="i16"><use href="#symb"/></svg><span>Symb</span></div>
        <div class="winctl"><button aria-label="Minimize"><svg class="i12"><use href="#min"/></svg></button><button aria-label="Maximize"><svg class="i12"><use href="#max"/></svg></button></div>
      </div>
      <div class="tools">
        <button aria-label="Outline"><svg class="i16"><use href="#otree"/></svg></button>
        <button class="pressed" aria-label="Overview"><svg class="i16"><use href="#oview"/></svg></button>
      </div>
      <div class="thumb">
        <svg viewBox="270 170 320 180" role="img" aria-label="Diagram overview">
          <use href="#diagram"/>
        </svg>
      </div>
      <div class="strip"></div>
    </section>
  </div>

  <div class="col-right">
    <section class="view editor">
      <div class="head">
        <div class="tab on"><svg class="i16"><use href="#cpd"/></svg><span>*m0.cp.cpd#0</span><button aria-label="Close"><svg class="i12"><use href="#close"/></svg></button></div>
        <div class="winctl"><button aria-label="Minimize"><svg class="i12"><use href="#min"/></svg></button><button aria-label="Maximize"><svg class="i12"><use href="#max"/></svg></button></div>
      </div>
      <div class="edit-body">
        <div class="canvas">
          <svg width="420" height="250" viewBox="220 107 420 250">
            <g id="diagram">
              <path d="M356 241l43-21M456 221l49 12" stroke="#b0b0b0" stroke-width="3"/>
              <path d="M496 226l9 7-12 3" fill="none" stroke="#b0b0b0" stroke-width="3"/>
              <g stroke="#b0b0b0" stroke-width="2" fill="#00d9ec">
                <rect x="277" y="177" width="77" height="165"/>
                <rect x="277" y="177" width="77" height="30" fill="url(#gHead)"/>
                <path d="M277 224h77M277 275h77M277 291h77"/>
                <rect x="506" y="177" width="77" height="117"/>
                <rect x="506" y="177" width="77" height="30" fill="url(#gHead)"/>
                <path d="M506 224h77M506 251h77M506 267h77"/>
                <path d="M408 191h37l11 30-11 30h-37l-10-30z"/>
              </g>
              <g fill="#fff">
                <rect x="287" y="230" width="16" height="16"/><rect x="287" y="254" width="16" height="16"/><rect x="286" y="296" width="19" height="18"/><rect x="286" y="320" width="19" height="18"/><rect x="517" y="230" width="16" height="16"/><rect x="516" y="272" width="19" height="18"/>
              </g>
              <use href="#clock" x="286" y="295" width="20" height="20"/>
              <use href="#clock" x="286" y="319" width="20" height="20"/>
              <use href="#clock" x="516" y="271" width="20" height="20"/>
              <rect x="312" y="253" width="29" height="16" fill="#a9c6f5"/>
              <g class="mark"><text x="295" y="243">S</text><text x="295" y="267">E</text><text x="525" y="243">P</text></g>
              <g class="lbl"><text x="303" y="197">cp1</text><text x="532" y="197">cp2</text><text x="415" y="213">cn1</text><text x="422" y="236">N</text><text x="312" y="242">sw1</text><text x="312" y="266">ext1</text><text x="312" y="309">wq1a</text><text x="312" y="333">wq1b</text><text x="543" y="242">&lt;...&gt;</text><text x="541" y="285">wq2a</text></g>
            </g>
          </svg>
        </div>
        <aside class="palette">
          <div class="pal-head"><svg class="i16"><use href="#pal"/></svg><span>Palette</span><button aria-label="Hide palette"><svg class="i12" viewBox="0 0 12 12"><path d="M3.500 1.500v9L9 6z" fill="#fff" stroke="#000"/></svg></button></div>
          <div class="pal-main">
            <div class="pal-col">
              <div class="pal-tools"><button class="pressed" aria-label="Select"><svg class="i16"><use href="#cursor"/></svg></button><button aria-label="Zoom in"><svg class="i16"><use href="#zin"/></svg></button><button aria-label="Zoom out"><svg class="i16"><use href="#zout"/></svg></button><button class="note" aria-label="Note"><svg class="i16"><use href="#note"/></svg></button></div>
              <div class="pal-list">
                <button><svg class="i12" viewBox="1 2 12 12"><path d="M3 4h8M3 8h8M3 12h8" stroke="#00767a" stroke-width="2"/></svg>Component</button>
                <button><svg class="i12"><use href="#async"/></svg>Asynchro...</button>
                <button><svg class="i12"><use href="#sync"/></svg>Synchron...</button>
                <button><svg class="i12"><use href="#proc"/></svg>Process</button>
                <button><svg class="i12"><use href="#clock"/></svg><span>Wake<br>Queue</span></button>
                <hr>
                <button><b>P</b>Port Wake</button>
                <button><b>S</b>Self Wake</button>
                <button><b>M</b>Method</button>
                <button><b>E</b>External</button>
                <button><b>T</b>Transition</button>
                <hr>
                <button><svg class="i12"><use href="#conn"/></svg>Connector</button>
                <button><svg class="i12"><use href="#send"/></svg>Sender</button>
                <button><svg class="i12"><use href="#recv"/></svg>Receiver</button>
              </div>
            </div>
            <div class="pal-scroll"><i></i></div>
          </div>
        </aside>
      </div>
    </section>

    <section class="view props">
      <div class="head">
        <div class="tab off"><svg class="i16"><use href="#probs"/></svg><span>Rodin Problems</span></div>
        <div class="tab on"><svg class="i16"><use href="#props"/></svg><span>Properties</span><button aria-label="Close"><svg class="i12"><use href="#close"/></svg></button></div>
        <div class="tab off"><svg class="i16"><use href="#tasks"/></svg><span>Tasks</span></div>
        <div class="winctl"><button class="pin" aria-label="Pin"><svg class="i16"><use href="#pin"/></svg></button><button class="near" aria-label="View menu"><svg class="i12"><use href="#vmenu"/></svg></button><button aria-label="Minimize"><svg class="i12"><use href="#min"/></svg></button><button aria-label="Maximize"><svg class="i12"><use href="#max"/></svg></button></div>
      </div>
      <h2><b>E</b>External : ext1</h2>
      <div class="prop-body">
        <nav class="side">
          <button class="up" aria-label="Scroll up"><svg width="12" height="6" viewBox="0 0 12 6"><path d="M1.500 4.500h9L7 1.500H5z" fill="#fff" stroke="#000"/></svg></button>
          <button class="sub">Witnesses</button>
          <button class="cat">Guards</button>
          <button class="cat">Actions</button>
          <button class="sub">Port–Sends</button>
          <button class="sub">Method–Calls</button>
          <button class="cur"><svg width="10" height="6" viewBox="0 0 10 6"><path d="M1.500 4.500h7L5 1z" fill="#fff" stroke="#8a35b8" stroke-width="1.400"/></svg>Wake–Events</button>
          <button class="cat">Advanced</button>
        </nav>
        <div class="wake">
          <span class="wake-label" id="wl">wake events</span>
          <div class="wake-main">
            <div class="grid">
              <table aria-labelledby="wl">
                <colgroup><col class="c-wide"><col class="c"><col class="c"><col class="c"><col class="c"><col></colgroup>
                <thead><tr><th>Label</th><th>Queue</th><th>Delay_min</th><th>Delay_max</th><th>WakeKind</th><th>Comment</th></tr></thead>
                <tbody>
                  <tr class="data"><td>cp1_wakes1</td><td>wq1a</td><td>1</td><td>5</td><td>AddEvent</td><td></td></tr>
                  <tr><td></td><td></td><td></td><td></td><td></td><td></td></tr>
                </tbody>
              </table>
              <div class="hscroll"><i></i></div>
            </div>
            <div class="actions"><button>Add Wake</button><button disabled>Delete Wake</button><button disabled>Move Up</button><button disabled>Move Down</button></div>
          </div>
        </div>
      </div>
    </section>
  </div>
</main>
<footer class="status"><i class="dots"></i></footer>
</body>
</html>
```
FILE: styles.css
```css
* { box-sizing: border-box; }
body {
  margin: 0; min-height: 100vh; display: flex; flex-direction: column;
  background: #e8e8e8; color: #000;
  font: 13px/18px "Noto Sans", "Open Sans", sans-serif;
}
button, input, select { font: inherit; color: inherit; }
button { border: 0; padding: 0; background: none; }
svg { display: block; flex: none; }
.defs { position: absolute; width: 0; height: 0; }
.i16 { width: 16px; height: 16px; }
.i12 { width: 12px; height: 12px; }

/* title bar */
.titlebar {
  display: flex; align-items: center; height: 19px; padding: 0 0 0 2px; gap: 8px;
  background: linear-gradient(#e4e4e4, #c4c4c4); border-bottom: 1px solid #6e6e6e;
}
.titlebar h1 {
  margin: 0; flex: 1; min-width: 0; overflow: hidden; white-space: nowrap;
  font: 14px/18px "DejaVu Sans Condensed", "Noto Sans", sans-serif; color: #333;
}
.lights { display: flex; gap: 8px; }
.lights svg { width: 12px; height: 12px; }

/* toolbars */
.toolbars { background: linear-gradient(#d0d0d0, #a6a6a6); border-bottom: 1px solid #5c5858; }
.bar { display: flex; align-items: center; }
.bar-top { height: 22px; }
.bar-bottom { height: 31px; padding-left: 2px; }
.tb { display: flex; align-items: center; flex: none; width: 22px; height: 22px; padding: 0 3px; }
.tb.dd { width: 30px; gap: 2px; }
.tb.dd::after { content: ""; border: 3px solid transparent; border-top: 5px solid #000; border-bottom: 0; }
.tb.dd:disabled::after { border-top-color: #888; }
.glyph { justify-content: flex-start; font: 20px/22px "Liberation Serif", serif; }
.glyph-double { text-shadow: 3px -1px 0 #777; padding-left: 1px; }
.glyph.faint { color: #c4c4c4; font-size: 15px; font-weight: 700; }
.glyph span { width: 16px; text-align: center; }
.italic { font-style: italic; }
.dots { flex: none; width: 5px; height: 16px; background: radial-gradient(circle, #8c8878 1px, transparent 1px) 0 0 / 5px 4px; }
.rule { flex: none; width: 6px; height: 26px; background: linear-gradient(#707070, #707070) center / 1px 100% no-repeat; }
.pick { position: relative; flex: none; margin-right: 6px; }
.pick select {
  appearance: none; width: 100%; height: 20px; padding: 0 7px; opacity: 1;
  color: #7c7c7c; border: 1px solid #8e8e8e; border-radius: 4px; background: linear-gradient(#dcdcdc, #cacaca);
}
.pick svg { position: absolute; right: 4px; top: 3px; width: 8px; height: 14px; }
.pick-font { width: 256px; }
.pick-size { width: 70px; }
.zoom { display: flex; flex: none; width: 111px; height: 21px; }
.zoom input { flex: 1; min-width: 0; border: 1px solid #7c7c7c; padding: 0 3px; background: #fff; }
.zoom button { width: 18px; border: 1px solid #7c7c7c; border-left: 0; border-radius: 0 4px 4px 0; background: linear-gradient(#fff, #dedede); }
.zoom button::after { content: ""; display: block; width: 0; margin: 0 auto; border: 4px solid transparent; border-top: 6px solid #444; border-bottom: 0; }
.quick { flex: 1; display: flex; justify-content: flex-end; padding-right: 6px; }
.quick input { width: 100px; height: 22px; text-align: center; border: 1px solid #8c8c8c; border-radius: 11px; background: #fff; padding: 0 4px; }
.quick input::placeholder { color: #777; opacity: 1; }
.persp { display: flex; align-items: center; flex: none; height: 31px; width: 113px; background: #ececec; }
.persp .dots { height: 22px; }
.persp-open { display: flex; height: 26px; align-items: center; justify-content: center; width: 31px; margin-left: 3px; border-right: 1px solid #777; box-shadow: -1px 0 0 #888; }
.persp-on { display: flex; align-items: center; gap: 2px; margin-left: 2px; width: 68px; height: 22px; padding-left: 2px; border: 1px solid #b8b8b8; background: #dcdcdc; white-space: nowrap; font-size: 11px; color: #222; }
.badge { position: relative; }
.badge b { position: absolute; left: 3px; top: 5px; font: 700 9px/9px "DejaVu Sans", sans-serif; color: #1d3d9c; }
.badge-right b { left: 9px; top: 0; color: #3f78b4; }

/* workbench */
.workbench { flex: 1; display: flex; gap: 5px; padding-top: 3px; }
.col-left { display: flex; flex-direction: column; gap: 4px; flex: none; width: 215px; }
.col-right { display: flex; flex-direction: column; gap: 4px; flex: 1; min-width: 0; }
.view { display: flex; flex-direction: column; min-height: 0; background: #fff; border-radius: 0 8px 8px 0; overflow: hidden; }
.view-explorer { flex: 334 1 0; }
.view-project { flex: 165 1 0; }
.view-outline { flex: 164 1 0; }
.editor { flex: 403 1 0; border-radius: 8px 8px 8px 0; border-bottom: 1px solid #b8b8b8; }
.props { flex: 264 1 0; border-radius: 8px; }
.head { display: flex; flex: none; height: 31px; }
.view-outline .head { height: 27px; }
.tab { display: flex; align-items: center; flex: none; gap: 4px; padding: 0 7px 0 2px; white-space: nowrap; }
.tab button { margin-left: 5px; }
.tab.on { border-right: 1px solid #dcdce0; border-top: 1px solid #c8c8d0; border-radius: 0 9px 0 0; background: linear-gradient(#dddde4, #fff); }
.tab.off { color: #888; }
.winctl { display: flex; flex: 1; justify-content: flex-end; gap: 10px; padding: 7px 13px 0 0; align-items: flex-start; }
.tools { display: flex; flex: none; align-items: center; justify-content: flex-end; gap: 6px; height: 23px; padding: 4px 10px 0 0; }
.tools .vm { margin: 0 0 6px 7px; }
.pale { opacity: .5; }
.filter { display: flex; align-items: center; flex: none; height: 22px; padding-left: 4px; gap: 3px; }
.filter input { width: 64px; height: 21px; border: 1px solid #9a9a9a; padding: 0 2px; }
.filter button { margin-left: 4px; }
.brk { width: 3px; height: 16px; border: 1px solid #888; border-left: 0; }
.tree { list-style: none; margin: 0; padding: 0 3px 0 0; }
.tree li { display: flex; align-items: center; height: 18px; padding-left: 9px; white-space: nowrap; }
.tree .d1 { padding-left: 25px; }
.tree .d2 { padding-left: 41px; }
.tree .leaf { padding-left: 35px; }
.tree li > svg { margin-right: 2px; }
.tree .sel { background: #d4d4d4; }
.tri { flex: none; width: 8px; height: 10px; margin-right: 2px; background: #868686; clip-path: polygon(0 0, 100% 50%, 0 100%); }
.tri.open { clip-path: polygon(0 10%, 100% 10%, 50% 90%); }
.view-outline .tools { height: 24px; padding: 1px 8px 0 0; gap: 3px; }
.view-outline .tab.on { padding-right: 6px; }
.view-outline .tab.off { padding: 0 0 0 4px; gap: 3px; }
.pressed { background: #e2e2e2; border: 1px solid #b0b0b0; padding: 2px; }
.thumb { flex: 1; min-height: 0; padding: 15px 0 0 13px; }
.thumb svg { width: 91px; height: 52px; }
.strip { flex: none; height: 13px; margin: 0 3px 2px 0; background: #f0f0f0; }

/* editor */
.editor .head { background: linear-gradient(#f6f6f6, #d8d8d8); border-top: 1px solid #b4b4b4; border-bottom: 1px solid #a8b8cc; }
.editor .tab.on { background: #fff; border-color: #a8b8cc; border-top: 0; margin-bottom: -1px; padding-left: 4px; }
.editor .winctl, .props .winctl { padding-right: 12px; }
.editor .winctl { padding-top: 6px; }
.edit-body { display: flex; flex: 1; min-height: 0; }
.canvas { flex: 1; min-width: 0; overflow: hidden; margin: 0 16px 16px 0; border: solid #e2e2e2; border-width: 0 1px 1px 0; box-shadow: 0 0 6px #eee; }
.lbl text { font: 13px "Noto Sans", sans-serif; }
.mark text { font: 700 14px "DejaVu Sans", sans-serif; fill: #00767a; text-anchor: middle; }
.palette { display: flex; flex-direction: column; flex: none; width: 128px; padding-right: 3px; border-left: 1px solid #9c9c9c; }
.pal-head { display: flex; align-items: center; flex: none; gap: 2px; height: 26px; padding: 0 5px 0 4px; border-bottom: 1px solid #a4a4a4; background: linear-gradient(#fff, #eee); }
.pal-head button { margin-left: auto; }
.pal-main { display: flex; flex: 1; min-height: 0; }
.pal-col { flex: 1; min-width: 0; }
.pal-tools { display: flex; align-items: center; gap: 3px; height: 23px; padding-left: 2px; background: #e6e6e6; border-bottom: 1px solid #d4d4d4; }
.pal-tools .pressed { padding: 1px 0; }
.note { display: flex; align-items: center; gap: 4px; }
.note::after { content: ""; border: 2px solid transparent; border-top: 3px solid #000; border-bottom: 0; }
.pal-list { display: flex; flex-direction: column; padding-top: 1px; }
.pal-list button { display: flex; align-items: flex-start; gap: 5px; height: 23px; padding: 3px 0 0 18px; line-height: 16px; text-align: left; white-space: nowrap; }
.pal-list button:has(span) { height: 39px; }
.pal-list svg { margin-top: 2px; }
.pal-list b { width: 12px; text-align: center; font: 700 10px/17px "DejaVu Sans", sans-serif; color: #00767a; }
.pal-list hr { width: calc(100% - 7px); margin: 2px 0 2px 3px; border: 0; border-top: 1px solid #a0a0a0; }
.pal-list button:last-child { height: 18px; }
.pal-scroll { flex: none; width: 13px; padding: 3px 2px 12px; background: #f8f8f8; border-left: 1px solid #eee; }
.pal-scroll i { display: block; height: 100%; width: 8px; border-radius: 4px; background: #c4c4c4; }

/* properties */
.props .tab.on { border-radius: 9px 9px 0 0; border-left: 1px solid #dcdce0; padding-left: 4px; }
.props .tab.off { padding: 0 6px 0 4px; }
.winctl .pin { margin: -2px 4px 0 0; }
.winctl .near { margin-right: -3px; }
.props .winctl .near { margin-top: -1px; }
.props h2 {
  display: flex; align-items: center; flex: none; gap: 8px; height: 30px; margin: 0 1px 0 2px; padding: 2px 0 0 8px;
  border-bottom: 1px solid #c4d2e8; background: linear-gradient(#fff, #eaf0fb); color: #58687e; font-size: 15px; font-weight: 700;
}
.props h2 b { font: 700 10px/12px "DejaVu Sans", sans-serif; color: #00767a; width: 9px; }
.prop-body { display: flex; flex: 1; min-height: 0; padding-bottom: 4px; }
.side { display: flex; flex-direction: column; flex: none; width: 137px; margin-left: 2px; background: linear-gradient(to left, #999 1px, #e8e8e8 1px); }
.side button { display: flex; align-items: center; flex: none; height: 23px; padding-bottom: 2px; border: 1px solid #999; border-left: 0; border-bottom: 0; box-shadow: inset 0 -1px 0 #fff; white-space: nowrap; }
.side .up { height: 10px; padding-bottom: 0; justify-content: center; background: #e8e8e8; }
.side .sub { padding-left: 14px; background: #e9e9e9; }
.side .cat { padding-left: 7px; background: linear-gradient(#dadac2, #c6c6ae); }
.side .cat:last-child { border-bottom: 1px solid #999; }
.side .cur { padding-left: 16px; gap: 8px; border-right-color: #fff; background: #fff; font-weight: 700; }
.wake { display: flex; flex: 1; min-width: 0; padding: 8px 9px 3px 10px; }
.wake-label { flex: none; width: 97px; padding-top: 70px; }
.wake-main { display: flex; flex-direction: column; flex: 1; min-width: 0; gap: 4px; }
.grid { display: flex; flex-direction: column; flex: 1; min-height: 0; border: 1px solid #a6a6a6; }
.grid table { width: 100%; height: 141px; border-collapse: collapse; table-layout: fixed; }
.c-wide { width: 159px; }
.c { width: 100px; }
.grid th { height: 16px; padding: 0 2px; text-align: left; vertical-align: top; font-size: 11px; line-height: 14px; font-weight: 400; border-bottom: 1px solid #b0b0b0; border-right: 1px solid #c4c4c4; background: linear-gradient(#fff 45%, #ececec 50%, #f2f2f2); }
.grid td { padding: 0 3px; border-right: 1px solid #c4c4c4; font: 10px/14px "DejaVu Sans Mono", monospace; }
.grid th:last-child, .grid td:last-child { border-right: 0; }
.data td { height: 14px; }
.hscroll { flex: none; height: 15px; margin-top: auto; padding: 3px; border-top: 1px solid #ddd; background: linear-gradient(#f2f2f2, #fff); }
.hscroll i { display: block; width: 67%; height: 8px; border-radius: 4px; background: #c2c2c2; }
.actions { display: flex; gap: 11px; }
.actions button { height: 27px; padding: 0 5px; border: 1px solid #8c8c8c; background: linear-gradient(#e6e6e6, #fafafa); white-space: nowrap; }
.actions button:disabled { color: #888; border-color: #c4c4c4; background: linear-gradient(#efefef, #fcfcfc); }

.status { display: flex; justify-content: flex-end; align-items: center; height: 24px; padding-right: 28%; }
```
